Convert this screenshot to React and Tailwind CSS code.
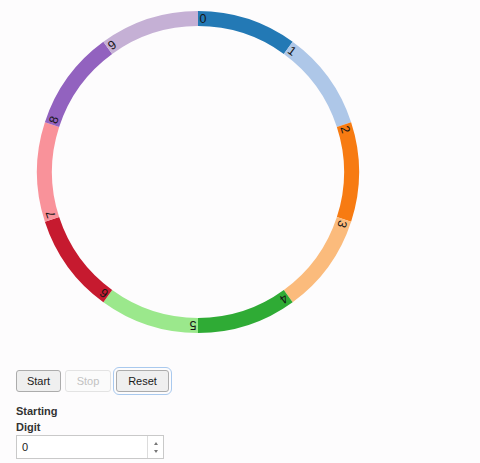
import React from "react";

const COLORS = ["#2379b5","#aec7e8","#f77b12","#fbbb7c","#2fab35","#9be88c","#c61a2f","#f9929a","#9262bf","#c5b0d5"];
const CX = 198, CY = 172, RO = 161, RI = 146;

function pt(r, deg) {
  const a = (deg * Math.PI) / 180;
  return [r * Math.sin(a), -r * Math.cos(a)];
}

function arc(i) {
  const a0 = i * 36, a1 = (i + 1) * 36;
  const [x0, y0] = pt(RO, a0);
  const [x1, y1] = pt(RO, a1);
  const [x2, y2] = pt(RI, a1);
  const [x3, y3] = pt(RI, a0);
  return `M${x0},${y0}A${RO},${RO} 0 0 1 ${x1},${y1}L${x2},${y2}A${RI},${RI} 0 0 0 ${x3},${y3}Z`;
}

export default function App() {
  return (
    <div className="w-[480px] h-[463px] bg-[#fdfcfd] overflow-hidden" style={{ fontFamily: '"Liberation Sans", Arial, sans-serif' }}>
      <svg width="400" height="367" className="block">
        <g transform={`translate(${CX},${CY})`}>
          {COLORS.map((c, i) => (
            <path key={i} d={arc(i)} fill={c} />
          ))}
          {COLORS.map((c, i) => (
            <g key={"t" + i} transform={`rotate(${i * 36})`}>
              <text x="1.5" y="-149" fontSize="12.5" fill="#151515" fontFamily='"Liberation Sans", Arial, sans-serif'>{i}</text>
            </g>
          ))}
        </g>
      </svg>
      <div className="pl-4">
        <div className="flex items-center gap-1 h-[28px]">
          <button className="w-[45px] h-[22px] border border-[#acacac] bg-[#efefef] rounded-[3px] text-[11px] text-[#1a1a1a]">Start</button>
          <button className="w-[46px] h-[22px] border border-[#e3e3e3] bg-[#fbfbfb] rounded-[3px] text-[11px] text-[#c2c2c2]">Stop</button>
          <button className="ml-[1px] w-[53px] h-[22px] border border-[#acacac] bg-[#efefef] rounded-[3px] text-[11px] text-[#1a1a1a] outline outline-1 outline-[#a9c9ee] outline-offset-2">Reset</button>
        </div>
        <div className="mt-[8px] w-[60px] text-[11px] leading-[16px] font-bold text-[#333]">Starting Digit</div>
        <div className="flex w-[148px] h-[24px] border border-[#c9c9c9] bg-white">
          <div className="flex-1 flex items-center pl-[5px] text-[11px] text-[#222]">0</div>
          <div className="w-[16px] border-l border-[#dcdcdc] flex flex-col items-center justify-center gap-[5px]">
            <div className="w-0 h-0 border-l-[2px] border-r-[2px] border-b-[3px] border-l-transparent border-r-transparent border-b-[#777]" />
            <div className="w-0 h-0 border-l-[2px] border-r-[2px] border-t-[3px] border-l-transparent border-r-transparent border-t-[#777]" />
          </div>
        </div>
      </div>
    </div>
  );
}
